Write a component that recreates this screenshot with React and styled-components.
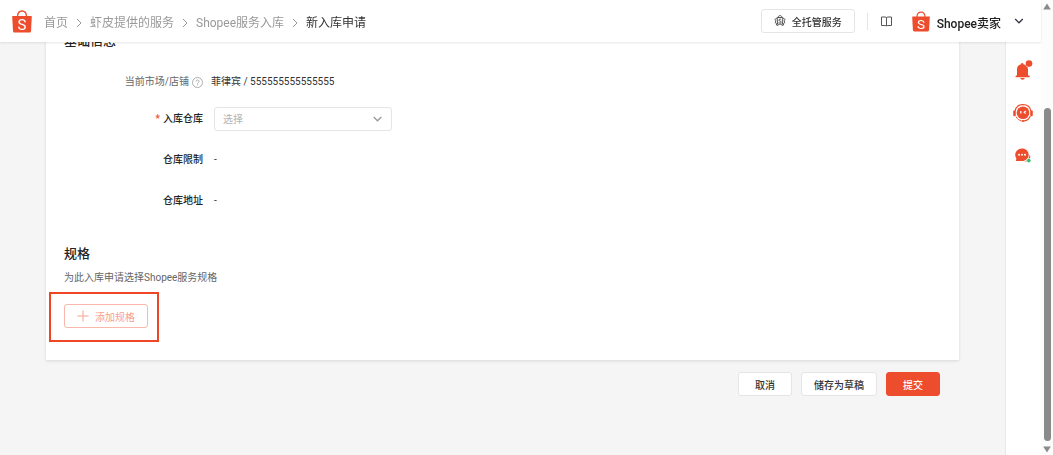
import React, { useState } from 'react';
import styled, { createGlobalStyle } from 'styled-components';

const GlobalStyle = createGlobalStyle`
  * {
    box-sizing: border-box;
  }
  body {
    margin: 0;
    background-color: #f5f5f5;
    color: #333;
    font-family: Roboto, 'Noto Sans CJK SC', sans-serif;
    font-size: 10px;
    line-height: 16px;
  }
  button, select {
    font-family: inherit;
    font-size: inherit;
  }
`;

const Page = styled.div`
  display: flex;
  min-height: 100vh;
`;

const Header = styled.header`
  position: fixed;
  top: 0;
  left: 0;
  right: 12px;
  z-index: 10;
  display: flex;
  align-items: center;
  justify-content: space-between;
  height: 42px;
  padding: 0 17px 0 12px;
  background-color: white;
  box-shadow: 0 1px 2px rgba(0, 0, 0, 0.1);
`;

const HeaderSide = styled.div`
  display: flex;
  align-items: center;
`;

const Breadcrumb = styled.nav`
  display: flex;
  align-items: center;
  gap: 8px;
  margin-left: 12px;
  padding-top: 3px;
  font-size: 12px;
  color: #333;
  white-space: nowrap;
`;

const Crumb = styled.a`
  color: #999;
  text-decoration: none;
  &:hover {
    color: #ee4d2d;
  }
`;

const Button = styled.button`
  display: inline-flex;
  align-items: center;
  justify-content: center;
  gap: 6px;
  height: 24px;
  padding: 0 ${props => props.$padding || 12}px;
  border: 1px solid ${props => props.$primary ? '#ee4d2d' : '#e5e5e5'};
  border-radius: 3px;
  background-color: ${props => props.$primary ? '#ee4d2d' : 'white'};
  color: ${props => props.$primary ? 'white' : '#333'};
  font-weight: 500;
  white-space: nowrap;
  cursor: pointer;
`;

const AddButton = styled(Button)`
  border-color: #f9b8ab;
  color: #f7a08f;
  font-weight: 400;
  &:disabled {
    cursor: not-allowed;
  }
`;

const Divider = styled.span`
  width: 1px;
  height: 17px;
  margin: 0 13px 0 12px;
  background-color: #e5e5e5;
`;

const IconButton = styled.button`
  display: flex;
  padding: 0;
  border: none;
  background: none;
  cursor: pointer;
`;

const Account = styled.button`
  display: flex;
  align-items: center;
  gap: 7px;
  margin-left: 20px;
  padding: 0;
  border: none;
  background: none;
  color: #222;
  cursor: pointer;
`;

const AccountName = styled.span`
  margin-right: 6px;
  padding-top: 2px;
  font-size: 12px;
  font-weight: 500;
`;

const Main = styled.main`
  flex: 1;
  min-width: 0;
  padding: 0 46px;
`;

const Card = styled.div`
  padding: 31px 18px 18px;
  background-color: white;
  box-shadow: 0 1px 3px rgba(0, 0, 0, 0.12);
`;

const SectionTitle = styled.h2`
  margin: 0;
  color: #222;
  font-size: 13px;
  font-weight: 500;
  line-height: 20px;
`;

const Form = styled.div`
  display: flex;
  flex-direction: column;
  gap: 17px;
  margin-bottom: 31px;
`;

const FormRow = styled.div`
  display: grid;
  grid-template-columns: 139px 1fr;
  column-gap: 11px;
  align-items: center;
  min-height: 24px;
  color: #333;
`;

const ShopRow = styled(FormRow)`
  column-gap: 8px;
  margin: 19px 0 13px;
`;

const Label = styled.label`
  display: flex;
  align-items: center;
  justify-content: flex-end;
  gap: 3px;
  color: ${props => props.$muted ? '#666' : '#222'};
  font-weight: ${props => props.$muted ? 400 : 500};
`;

const Required = styled.span`
  color: #ee4d2d;
`;

const SelectBox = styled.div`
  position: relative;
  width: 178px;
  svg {
    position: absolute;
    top: 7px;
    right: 10px;
    pointer-events: none;
  }
`;

const Select = styled.select`
  width: 100%;
  height: 24px;
  padding: 0 24px 0 8px;
  border: 1px solid #e5e5e5;
  border-radius: 3px;
  background-color: white;
  color: #b2b2b2;
  appearance: none;
`;

const Description = styled.p`
  margin: 6px 0;
  color: #666;
`;

const Highlight = styled.div`
  width: fit-content;
  margin-left: -15px;
  padding: 10px 9px 12px 13px;
  border: 2px solid #ee4526;
`;

const Actions = styled.div`
  display: flex;
  justify-content: flex-end;
  gap: 9px;
  padding: 12px 19px;
`;

const Rail = styled.aside`
  display: flex;
  flex-direction: column;
  align-items: center;
  gap: 23px;
  width: 36px;
  padding: 60px 2px 0 0;
  border-left: 1px solid #e8e8e8;
  background-color: white;
`;

const ScrollTrack = styled.div`
  display: flex;
  flex-direction: column;
  align-items: center;
  justify-content: space-between;
  width: 12px;
  padding: 3px 0 2px;
  background-color: #fcfcfc;
`;

const ScrollThumb = styled.div`
  flex: 1;
  width: 7px;
  margin: 98px 0 5px;
  border-radius: 4px;
  background-color: #8a8a8a;
`;

function ShopeeLogo({ width, height }) {
  return (
    <svg width={width} height={height} viewBox="0 0 20 23" aria-hidden="true">
      <path d="M5.5 6.5C5.6 3 7.5 1 10 1s4.400 2 4.500 5.500" fill="none" stroke="#ee4d2d" strokeWidth="1.300" />
      <path d="M.8 6h18.400c.4 0 .6.3.6.6L19 21c-.1 1-.7 1.600-1.600 1.600H2.600C1.700 22.600 1.100 22 1 21L.2 6.600C.2 6.300.4 6 .8 6z" fill="#ee4d2d" />
      <text x="10" y="19.500" textAnchor="middle" fontSize="15" fill="white">S</text>
    </svg>
  );
}

function DownArrow({ width = 9, color = '#999' }) {
  return (
    <svg width={width} height="10" viewBox="0 0 9 10" fill="none" stroke={color} strokeWidth="1.300" aria-hidden="true">
      <path d="M.7 3l3.800 3.800L8.300 3" />
    </svg>
  );
}

function Separator() {
  return (
    <svg width="6" height="10" viewBox="0 0 6 10" fill="none" stroke="#999" aria-hidden="true">
      <path d="M1 1l4 4-4 4" />
    </svg>
  );
}

function ServiceIcon() {
  return (
    <svg width="12" height="12" viewBox="0 0 12 12" fill="none" stroke="#444" strokeWidth="0.900" aria-hidden="true">
      <path d="M4 2.500C4.200 1.200 5 .6 6 .6s1.800.6 2 1.900" />
      <path d="M3.200 2.500h5.600l-.3 6.700h-5z" />
      <path d="M2.800 3.200L.8 4.500l1 1.200-.6 2 1.300.8-.1 1.500 1.900.5M9.200 3.200l2 1.300-1 1.200.6 2-1.300.8.1 1.500-1.900.5" />
      <path d="M7.300 4.600C6.500 3.800 4.800 4 4.800 5.100c0 1.200 2.500.8 2.500 2 0 1.100-1.800 1.200-2.700.4" />
    </svg>
  );
}

function BookIcon() {
  return (
    <svg width="11" height="11" viewBox="0 0 11 11" fill="none" stroke="#555" aria-hidden="true">
      <path d="M.5 1h3.700c.7 0 1.300.4 1.300 1 0-.6.6-1 1.300-1h3.700v8.500H6.700c-.6 0-1 .2-1.200.7-.2-.5-.6-.7-1.200-.7H.5zM5.500 2v8" />
    </svg>
  );
}

function HelpIcon() {
  return (
    <svg width="11" height="11" viewBox="0 0 11 11" fill="none" stroke="#999" strokeWidth="0.800" aria-hidden="true">
      <circle cx="5.500" cy="5.500" r="5" />
      <path d="M4 4.500c0-2 3-2 3 0 0 1-1.500 1-1.500 2.200M5.500 7.500v.9" />
    </svg>
  );
}

function BellIcon() {
  return (
    <svg width="20" height="20" viewBox="0 0 20 20" fill="#ee4d2d" aria-hidden="true">
      <path d="M8 3.300h2.400v1c3 .5 4.600 2.500 4.600 5v6l1.700.8v1.200H2.600v-1.200l1.400-.8v-6c0-2.500 1.300-4.500 4-5zM7.300 18h4.400c-.2 1.100-1.100 1.700-2.200 1.700s-2-.6-2.200-1.700z" />
      <circle cx="16" cy="3.600" r="3.700" fill="white" />
      <circle cx="16" cy="3.600" r="3.300" />
    </svg>
  );
}

function AgentIcon() {
  return (
    <svg width="20" height="20" viewBox="0 0 20 20" fill="#ee4d2d" aria-hidden="true">
      <path d="M2.200 8C2.800 4 6 1.600 10 1.600S17.200 4 17.800 8M17.300 13c-1 3-3.200 4.600-6.200 4.900" fill="none" stroke="#ee4d2d" strokeWidth="1.100" />
      <circle cx="10" cy="9.800" r="6.300" />
      <rect x="0.200" y="7.300" width="2.600" height="6" rx="1.300" />
      <rect x="17.200" y="7.300" width="2.600" height="6" rx="1.300" />
      <path d="M3 13.500c1 2.400 2.800 3.700 5.500 4.300" fill="none" stroke="#ee4d2d" strokeWidth="0.900" />
      <ellipse cx="10" cy="18" rx="1.500" ry="1.100" />
      <path d="M7.800 8.100v2.400M12.800 8.100l-1.500 1.200 1.500 1.200" fill="none" stroke="white" strokeWidth="1.300" />
    </svg>
  );
}

function ChatIcon() {
  return (
    <svg width="20" height="20" viewBox="0 0 20 20" fill="#ee4d2d" aria-hidden="true">
      <path d="M9 2.500c3.800 0 6.700 2.700 6.700 6.200S12.800 15 9 15H2.800l.6-2.300c-.8-1.200-1.200-2.500-1.200-4C2.200 5.200 5.200 2.500 9 2.500z" />
      <path d="M16.600 8.500c1 2 .8 3.700.2 4.800l.5 2.200H11c3-.4 5.300-3 5.600-7z" />
      <circle cx="6" cy="8.700" r="1" fill="white" />
      <circle cx="9" cy="8.700" r="1" fill="white" />
      <circle cx="12" cy="8.700" r="1" fill="white" />
      <circle cx="15.800" cy="14.600" r="2.200" fill="#2fc26e" stroke="white" strokeWidth="0.700" />
    </svg>
  );
}

function App() {
  const [warehouse, setWarehouse] = useState('');

  return (
    <Page>
      <GlobalStyle />
      <Header>
        <HeaderSide>
          <ShopeeLogo width={20} height={23} />
          <Breadcrumb>
            <Crumb href="#home">首页</Crumb>
            <Separator />
            <Crumb href="#services">虾皮提供的服务</Crumb>
            <Separator />
            <Crumb href="#inbound">Shopee服务入库</Crumb>
            <Separator />
            <span>新入库申请</span>
          </Breadcrumb>
        </HeaderSide>
        <HeaderSide>
          <Button>
            <ServiceIcon />
            全托管服务
          </Button>
          <Divider />
          <IconButton aria-label="指南"><BookIcon /></IconButton>
          <Account>
            <ShopeeLogo width={18} height={21} />
            <AccountName>Shopee卖家</AccountName>
            <DownArrow width={10} color="#334" />
          </Account>
        </HeaderSide>
      </Header>

      <Main>
        <Card>
          <SectionTitle>基础信息</SectionTitle>
          <ShopRow>
            <Label as="span" $muted>当前市场/店铺<HelpIcon /></Label>
            <span>菲律宾 / 555555555555555</span>
          </ShopRow>
          <Form>
            <FormRow>
              <Label htmlFor="warehouse"><Required>*</Required>入库仓库</Label>
              <SelectBox>
                <Select id="warehouse" value={warehouse} onChange={(e) => setWarehouse(e.target.value)}>
                  <option value="">选择</option>
                </Select>
                <DownArrow />
              </SelectBox>
            </FormRow>
            <FormRow>
              <Label as="span">仓库限制</Label>
              <span>-</span>
            </FormRow>
            <FormRow>
              <Label as="span">仓库地址</Label>
              <span>-</span>
            </FormRow>
          </Form>
          <SectionTitle>规格</SectionTitle>
          <Description>为此入库申请选择Shopee服务规格</Description>
          <Highlight>
            <AddButton disabled={!warehouse}>
              <svg width="12" height="12" viewBox="0 0 12 12" stroke="currentColor" aria-hidden="true">
                <path d="M6 .5v11M.5 6h11" />
              </svg>
              添加规格
            </AddButton>
          </Highlight>
        </Card>
        <Actions>
          <Button $padding={16}>取消</Button>
          <Button>储存为草稿</Button>
          <Button $primary $padding={16}>提交</Button>
        </Actions>
      </Main>

      <Rail>
        <IconButton aria-label="通知"><BellIcon /></IconButton>
        <IconButton aria-label="客服"><AgentIcon /></IconButton>
        <IconButton aria-label="聊天"><ChatIcon /></IconButton>
      </Rail>
      <ScrollTrack aria-hidden="true">
        <svg width="8" height="7" viewBox="0 0 8 7"><path d="M4 .5L7.800 6.500H.2z" fill="#8a8a8a" /></svg>
        <ScrollThumb />
        <svg width="8" height="7" viewBox="0 0 8 7"><path d="M4 6.500L.2.5h7.600z" fill="#8a8a8a" /></svg>
      </ScrollTrack>
    </Page>
  );
}

export default App;
